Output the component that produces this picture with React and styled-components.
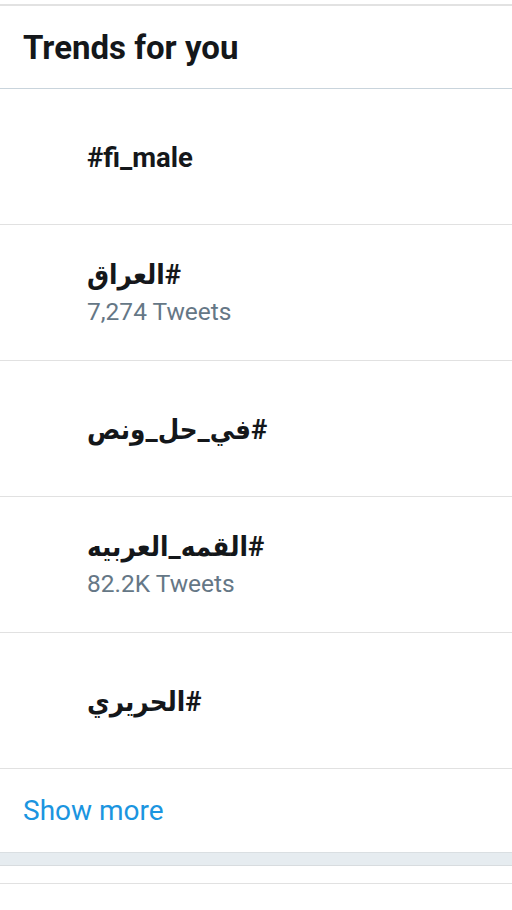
import React from "react";
import styled, { createGlobalStyle } from "styled-components";

const GlobalStyle = createGlobalStyle`
  body {
    margin: 0;
    background: #ffffff;
    font-family: Roboto, "DejaVu Sans", sans-serif;
  }
`;

const trends = [
  { name: "#fi_male" },
  { name: "#العراق", count: "7,274 Tweets" },
  { name: "#في_حل_ونص" },
  { name: "#القمه_العربيه", count: "82.2K Tweets" },
  { name: "#الحريري" },
];

const App = () => {
  return (
    <>
      <GlobalStyle />
      <Page>
        <Card>
          <Header>
            <Title>Trends for you</Title>
          </Header>
          {trends.map((t) => (
            <TrendRow key={t.name}>
              <TrendName dir="auto">{t.name}</TrendName>
              {t.count && <TrendCount>{t.count}</TrendCount>}
            </TrendRow>
          ))}
          <ShowMore>Show more</ShowMore>
        </Card>
        <Gap />
        <NextCard />
      </Page>
    </>
  );
};

const Page = styled.div`
  padding-top: 4px;
  width: 100%;
  height: 910px;
  overflow: hidden;
`;

const Card = styled.div`
  border-top: 2px solid #e2e2e2;
  background: #fff;
`;

const Header = styled.div`
  height: 82px;
  display: flex;
  align-items: center;
  padding-left: 23px;
  border-bottom: 1px solid #c9d4dc;
`;

const Title = styled.h2`
  margin: 0;
  font-size: 33px;
  font-weight: 700;
  color: #14171a;
`;

const TrendRow = styled.div`
  height: 135px;
  display: flex;
  flex-direction: column;
  justify-content: center;
  padding-left: 87px;
  border-bottom: 1px solid #e1e1e1;
`;

const TrendName = styled.div`
  text-align: left;
  font-family: Roboto, "DejaVu Sans Condensed", "DejaVu Sans", sans-serif;
  font-size: 27.5px;
  font-weight: 700;
  color: #14171a;
  line-height: 36px;
  margin-top: 2px;
`;

const TrendCount = styled.div`
  font-size: 24.5px;
  color: #657786;
  line-height: 38px;
`;

const ShowMore = styled.div`
  height: 83px;
  display: flex;
  align-items: center;
  padding-left: 23px;
  font-size: 28px;
  color: #1b95e0;
`;

const Gap = styled.div`
  height: 12px;
  background: #e6ecf0;
  border-top: 1px solid #dadfe2;
  border-bottom: 1px solid #d8dcdf;
`;

const NextCard = styled.div`
  margin-top: 17px;
  border-top: 1px solid #e1e1e1;
  height: 40px;
  background: #fff;
`;

export default App;
